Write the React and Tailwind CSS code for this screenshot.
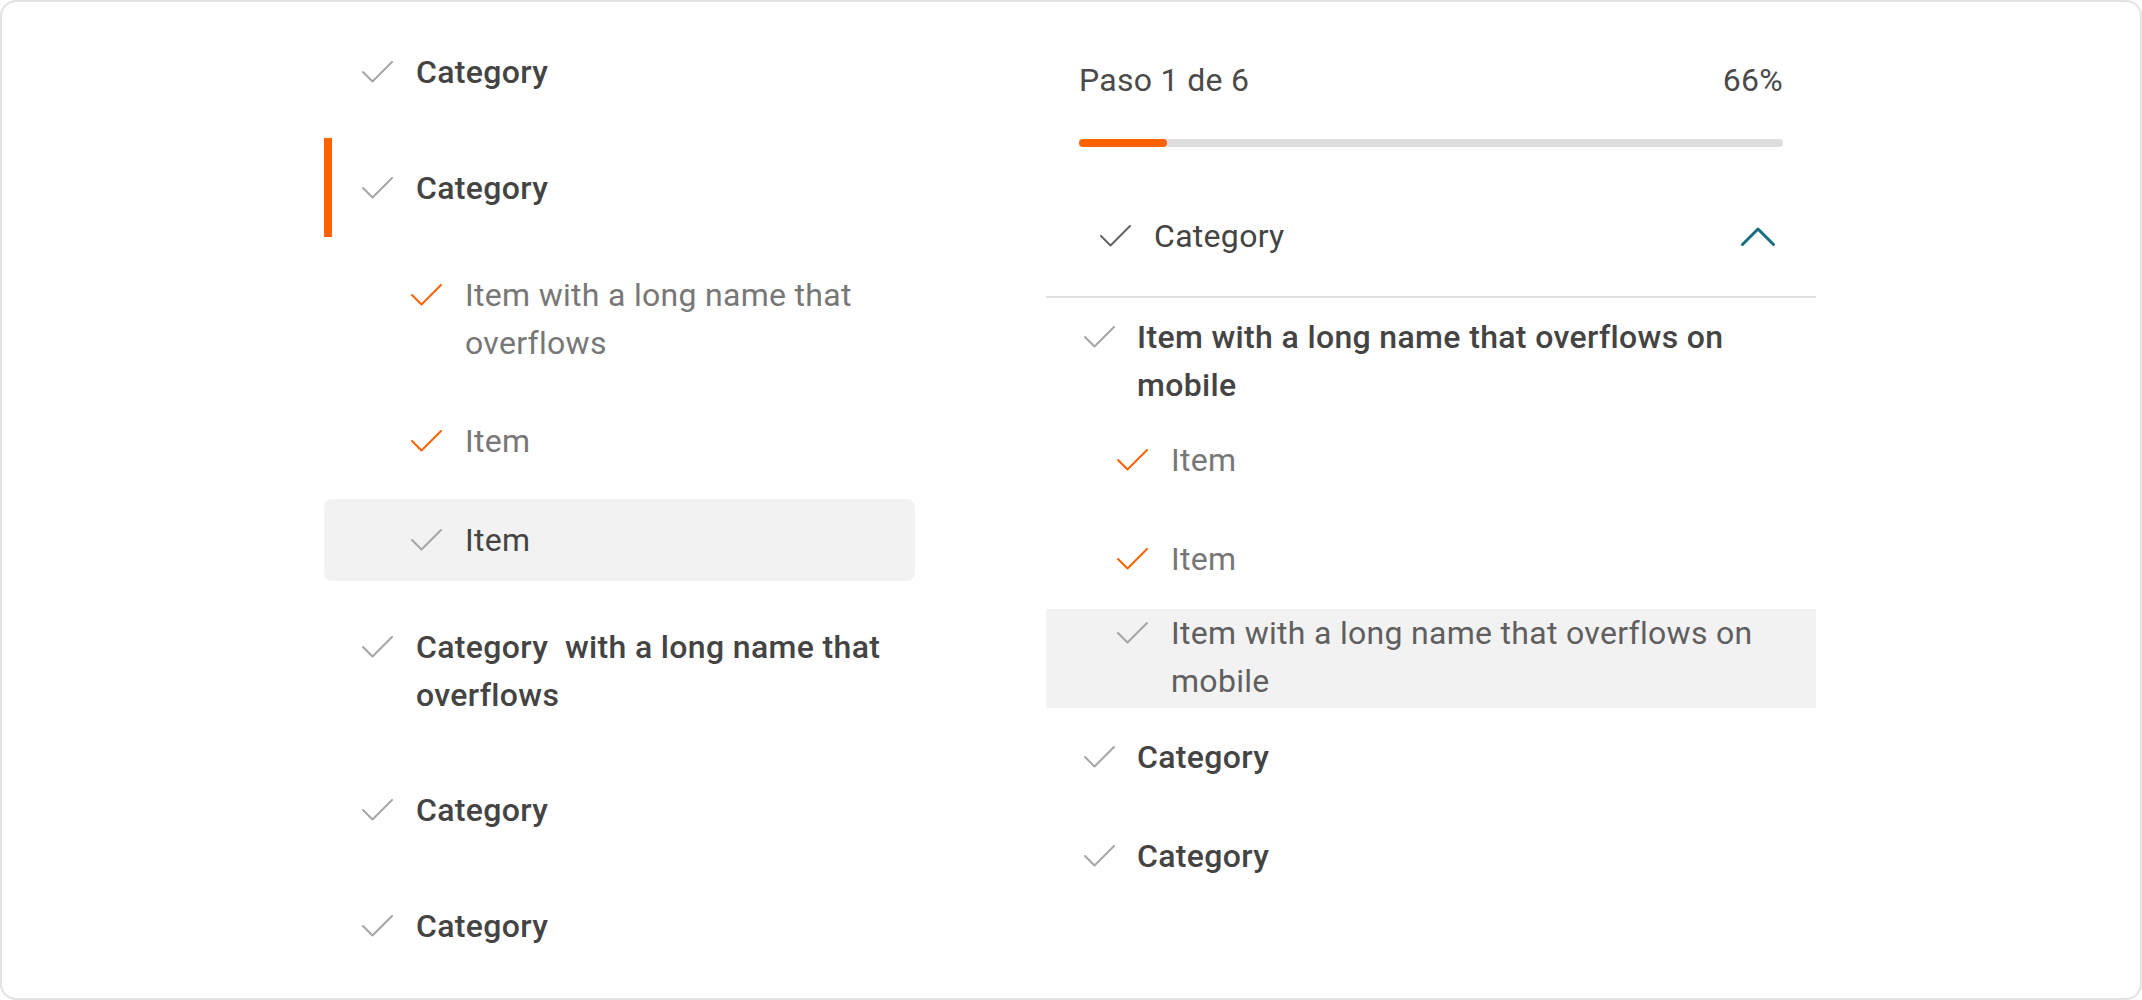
import React from "react";

const Check = ({ className }) => (
  <svg width="31" height="22" viewBox="0 0 31 22" fill="none" className={className}>
    <path
      d="M1 11 L10.5 20.5 L30 1"
      stroke="currentColor"
      strokeWidth="2"
      strokeLinecap="round"
      strokeLinejoin="round"
    />
  </svg>
);

const ChevronUp = () => (
  <svg width="34" height="19" viewBox="0 0 34 19" fill="none" className="text-[#16707f]">
    <path
      d="M1.5 17.5 L17 2 L32.5 17.5"
      stroke="currentColor"
      strokeWidth="3"
      strokeLinecap="round"
      strokeLinejoin="round"
    />
  </svg>
);

const sidebar = [
  { type: "cat", label: "Category" },
  { type: "cat", label: "Category", active: true },
  { type: "item", label: "Item with a long name that overflows", done: true },
  { type: "item", label: "Item", done: true },
  { type: "item", label: "Item", hover: true },
  { type: "cat", label: "Category\u00a0 with a long name that overflows" },
  { type: "cat", label: "Category" },
  { type: "cat", label: "Category" },
];

const mobileList = [
  { type: "cat", label: "Item with a long name that overflows on mobile" },
  { type: "item", label: "Item", done: true },
  { type: "item", label: "Item", done: true },
  { type: "item", label: "Item with a long name that overflows on mobile", hover: true },
  { type: "cat", label: "Category" },
  { type: "cat", label: "Category" },
];

const SideRow = ({ row }) => {
  if (row.type === "cat") {
    return (
      <div
        className={`flex items-start gap-[23px] py-[25.5px] ${
          row.active ? "border-l-[8px] border-[#ff6200] pl-[30px]" : "pl-[38px]"
        }`}
      >
        <div className="h-[48px] flex items-center shrink-0">
          <Check className="text-[#a6a6a6]" />
        </div>
        <span className="text-[32px] leading-[48px] tracking-[0.35px] font-medium text-[#444444]">
          {row.label}
        </span>
      </div>
    );
  }
  return (
    <div
      className={`flex items-start gap-[23px] pl-[87px] py-[17px] rounded-[8px] ${
        row.hover ? "bg-[#f2f2f2]" : ""
      }`}
    >
      <div className="h-[48px] flex items-center shrink-0">
        <Check className={row.done ? "text-[#ff6200]" : "text-[#a6a6a6]"} />
      </div>
      <span
        className={`text-[32px] leading-[48px] tracking-[0.3px] ${
          row.hover ? "text-[#444444]" : "text-[#777777]"
        }`}
      >
        {row.label}
      </span>
    </div>
  );
};

const MobileRow = ({ row }) => {
  const isCat = row.type === "cat";
  return (
    <div
      className={`h-[99px] flex items-center pr-[33px] ${isCat ? "pl-[38px]" : "pl-[71px]"} ${
        row.hover ? "bg-[#f2f2f2] pb-[4px]" : "pb-[2px]"
      }`}
    >
      <div className={`flex items-start ${isCat ? "gap-[22px]" : "gap-[23px]"}`}>
        <div className="h-[48px] flex items-center shrink-0">
          <Check className={row.done ? "text-[#ff6200]" : "text-[#a6a6a6]"} />
        </div>
        <span
          className={`text-[32px] leading-[48px] ${
            isCat
              ? "font-medium tracking-[0.35px] text-[#444444]"
              : row.hover
              ? "tracking-[0.3px] text-[#5f5f5f]"
              : "tracking-[0.3px] text-[#777777]"
          }`}
        >
          {row.label}
        </span>
      </div>
    </div>
  );
};

const App = () => {
  return (
    <div className="w-full h-[1000px] bg-white border-2 border-[#e2e2e2] rounded-[16px] flex overflow-hidden font-[Roboto,sans-serif]">
      {/* desktop sidebar */}
      <div className="ml-[322px] w-[591px] pt-[20.5px] flex flex-col gap-[16.5px] shrink-0">
        {sidebar.map((row, i) => (
          <SideRow key={i} row={row} />
        ))}
      </div>

      {/* mobile stepper */}
      <div className="ml-[131px] w-[770px] pt-[54px] shrink-0">
        <div className="px-[33px] flex justify-between text-[32px] leading-[48px] tracking-[0.3px] text-[#4a4a4a]">
          <span>Paso 1 de 6</span>
          <span>66%</span>
        </div>
        <div className="mx-[33px] mt-[35px] h-[8px] rounded-full bg-[#dddddd]">
          <div className="h-full w-[88px] rounded-full bg-[#ff6200]"></div>
        </div>

        <div className="mt-[41px] h-[96px] flex items-center justify-between pl-[54px] pr-[41px]">
          <div className="flex items-center gap-[23px]">
            <Check className="text-[#666666]" />
            <span className="text-[32px] leading-[48px] tracking-[0.3px] text-[#444444]">Category</span>
          </div>
          <ChevronUp />
        </div>
        <div className="mt-[12px] h-[2px] bg-[#e0e0e0]"></div>

        <div className="pt-[14px]">
          {mobileList.map((row, i) => (
            <MobileRow key={i} row={row} />
          ))}
        </div>
      </div>
    </div>
  );
};

export default App;
